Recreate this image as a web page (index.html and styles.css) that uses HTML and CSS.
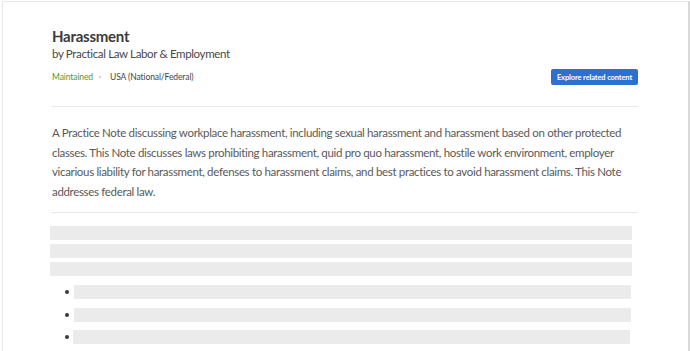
FILE: index.html
```html
<!DOCTYPE html>
<html lang="en">
<head>
<meta charset="utf-8">
<title>Harassment</title>
<link rel="stylesheet" href="styles.css">
</head>
<body>
<div class="card">
  <header class="head">
    <h1 class="title">Harassment</h1>
    <div class="byline">by Practical Law Labor &amp; Employment</div>
    <div class="meta">
      <div class="tags">
        <span class="status">Maintained</span>
        <span class="dot"></span>
        <span class="juris">USA (National/Federal)</span>
      </div>
      <button class="btn">Explore related content</button>
    </div>
  </header>
  <p class="desc">A Practice Note discussing workplace harassment, including sexual harassment and harassment based on other protected classes. This Note discusses laws prohibiting harassment, quid pro quo harassment, hostile work environment, employer vicarious liability for harassment, defenses to harassment claims, and best practices to avoid harassment claims. This Note addresses federal law.</p>
  <div class="skeleton">
    <div class="bar"></div>
    <div class="bar"></div>
    <div class="bar"></div>
    <ul class="blist">
      <li class="bitem"><div class="bar"></div></li>
      <li class="bitem"><div class="bar"></div></li>
      <li class="bitem last"><div class="bar"></div></li>
    </ul>
  </div>
</div>
</body>
</html>
```
FILE: styles.css
```css
html, body {
  margin: 0;
  padding: 0;
  background: #fff;
  overflow: hidden;
}
body {
  font-family: Lato, "Liberation Sans", sans-serif;
  color: #444;
}
.card {
  box-sizing: border-box;
  width: 688px;
  min-height: 400px;
  margin: 1px 0 0 2px;
  border-top: 1px solid #e6e6e6;
  border-left: 1px solid #e6e6e6;
  border-right: 2px solid #d9d9d9;
  padding: 24px 50px 0 49px;
}
.head {
  border-bottom: 1px solid #e8e8e8;
  padding-bottom: 21px;
}
.title {
  margin: 0;
  font-size: 15px;
  line-height: 20px;
  font-weight: 700;
  letter-spacing: -0.25px;
  color: #3a3a3a;
}
.byline {
  font-size: 11.5px;
  line-height: 16px;
  letter-spacing: -0.35px;
  color: #484848;
}
.meta {
  display: flex;
  justify-content: space-between;
  align-items: center;
  margin-top: 7px;
}
.tags {
  display: flex;
  align-items: center;
  font-size: 8.5px;
  line-height: 12px;
  letter-spacing: -0.1px;
}
.status { color: #4e9a33; }
.juris { color: #444; }
.dot {
  width: 2px;
  height: 2px;
  border-radius: 50%;
  background: #c4c4c4;
  margin: 0 9px 0 6px;
}
.btn {
  font-family: inherit;
  font-size: 7.5px;
  font-weight: 700;
  letter-spacing: -0.13px;
  color: #fff;
  background: #2f6fcf;
  border: 0;
  border-radius: 2px;
  height: 16px;
  width: 87px;
  padding: 0;
  white-space: nowrap;
}
.desc {
  margin: 0;
  padding: 16px 0 11px;
  font-size: 11.5px;
  line-height: 19.5px;
  letter-spacing: -0.33px;
  color: #595959;
  border-bottom: 1px solid #e8e8e8;
}
.skeleton {
  display: flex;
  flex-direction: column;
  gap: 4px;
  padding-top: 13px;
  margin-left: -2px;
  margin-right: 6px;
}
.bar {
  height: 14px;
  background: #ebebeb;
}
.blist {
  list-style: none;
  margin: 5px 0 0;
  padding: 0 0 0 15px;
  display: flex;
  flex-direction: column;
  gap: 8.5px;
}
.bitem {
  display: flex;
  align-items: center;
  margin-right: 1px;
}
.bitem::before {
  content: "";
  flex: none;
  width: 4px;
  height: 4px;
  border-radius: 50%;
  background: #3a3a3a;
  margin-right: 5px;
}
.bitem .bar {
  flex: 1;
}
.bitem.last {
  margin-right: 2px;
}
.bitem.last::before {
  margin-right: 4px;
}
```
